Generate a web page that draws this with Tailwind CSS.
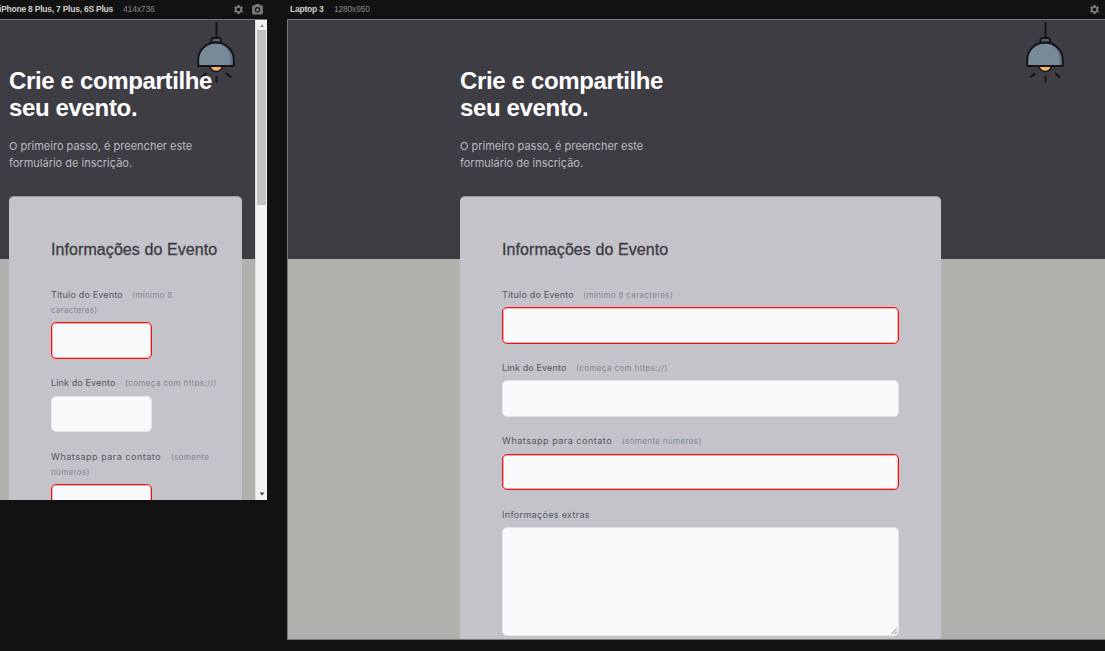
<!DOCTYPE html>
<html lang="pt-BR">
<head>
<meta charset="utf-8">
<title>Crie e compartilhe seu evento</title>
<script src="https://cdn.jsdelivr.net/npm/@tailwindcss/browser@4"></script>
</head>
<body class="h-[651px] w-[1105px] overflow-hidden bg-[#121212] font-['Inter',sans-serif]">
<svg class="hidden">
  <symbol id="gear" viewBox="0 0 24 24"><path fill="#77777a" d="M19.43 12.98c.04-.32.07-.64.07-.98s-.03-.66-.07-.98l2.11-1.65a.5.5 0 0 0 .12-.64l-2-3.46a.5.5 0 0 0-.61-.22l-2.49 1a7.3 7.3 0 0 0-1.69-.98l-.38-2.65A.49.49 0 0 0 14 2h-4a.49.49 0 0 0-.49.42l-.38 2.65c-.61.25-1.17.59-1.69.98l-2.49-1a.5.5 0 0 0-.61.22l-2 3.46a.49.49 0 0 0 .12.64l2.11 1.65a7.9 7.9 0 0 0 0 1.96l-2.11 1.65a.5.5 0 0 0-.12.64l2 3.46c.12.22.39.3.61.22l2.49-1c.52.4 1.08.73 1.69.98l.38 2.65c.03.24.24.42.49.42h4c.25 0 .46-.18.49-.42l.38-2.65a7.3 7.3 0 0 0 1.69-.98l2.49 1c.23.09.49 0 .61-.22l2-3.46a.5.5 0 0 0-.12-.64zM12 16a4 4 0 1 1 0-8 4 4 0 0 1 0 8z"/></symbol>
  <symbol id="camera" viewBox="0 0 24 24"><path fill="#77777a" fill-rule="evenodd" d="M9 2 7.200 4H4a2 2 0 0 0-2 2v13a2 2 0 0 0 2 2h16a2 2 0 0 0 2-2V6a2 2 0 0 0-2-2h-3.200L15 2zm3 5.500a5 5 0 1 1 0 10 5 5 0 0 1 0-10z"/><circle cx="12" cy="12.500" r="3" fill="#77777a"/></symbol>
  <symbol id="lamp" viewBox="0 0 40 64">
    <path d="M20.500 2v16" stroke="#141416" stroke-width="2"/>
    <path d="M14 45.500h12.500a6.200 6 0 0 1-12.500 0z" fill="#f5b277" stroke="#141416" stroke-width="1.600"/>
    <path d="M2.200 46v-6a17.800 17.500 0 0 1 35.600 0v6z" fill="#778a97"/>
    <path d="M28 25.500q7 5 7 14V46h-2 4v-7q0-8-9-13.500z" fill="#66718d" stroke="#66718d" stroke-width="1.500"/>
    <path d="M2.200 46v-6a17.800 17.500 0 0 1 35.600 0v6z" fill="none" stroke="#141416" stroke-width="2" stroke-linejoin="round"/>
    <path d="M15.500 22.500v-2.500a2 2 0 0 1 2-2h5.500a2 2 0 0 1 2 2v2.500z" fill="#5c5d66" stroke="#141416" stroke-width="1.800"/>
    <path d="M20.500 56v6.500M10.500 53l-5 4.500M30 53l5 4.500" stroke="#141416" stroke-width="2"/>
  </symbol>
</svg>

<template id="intro">
  <h1 class="text-[24px] leading-[27px] font-bold tracking-[-0.35px] whitespace-nowrap text-white font-['Liberation_Sans',sans-serif]">Crie e compartilhe<br>seu evento.</h1>
  <p class="mt-[17px] text-[11px] leading-[17px] whitespace-nowrap text-[#bab9bf]">O primeiro passo, é preencher este<br>formulário de inscrição.</p>
</template>

<div class="flex">
  <section class="w-[267px] shrink-0">
    <header class="flex h-[19px] items-center font-['Liberation_Sans',sans-serif] text-[8.500px]">
      <b class="w-[123px] whitespace-nowrap tracking-[-0.23px] text-[#cfcfcf] -indent-[1px]">iPhone 8 Plus, 7 Plus, 6S Plus</b>
      <span class="tracking-[-0.15px] text-[#858588]">414x736</span>
      <svg class="ml-auto size-[11px]"><use href="#gear"/></svg>
      <svg class="mr-[3px] ml-[7px] size-[13px]"><use href="#camera"/></svg>
    </header>
    <div class="flex h-[481px] overflow-hidden border-t border-[#77777a]">
      <main class="relative h-full w-[255px] bg-[linear-gradient(#3f3d44_239px,#b1b0ad_239px)] pt-[47px] pl-[9px]">
        <svg class="absolute top-0 left-[196px] h-[64px] w-[40px]"><use href="#lamp"/></svg>
        <div class="relative" data-intro></div>
        <div class="mt-[24px] h-[400px] w-[233px] rounded-t-[5px] border-t border-[#98979d] bg-[#c4c3c9] pt-[43px] pl-[42px]">
          <h2 class="h-[47px] whitespace-nowrap font-['Liberation_Sans',sans-serif] text-[16px] leading-[20px] tracking-[0.080px] text-[#3d3b43] [-webkit-text-stroke:0.300px_#3d3b43]">Informações do Evento</h2>
          <div class="mb-[16.500px] w-[175px]">
            <p class="mb-[5px] whitespace-nowrap text-[9px] leading-[15.200px] tracking-[0.190px] text-[#52585f]">Título do Evento <small class="ml-[6.500px] text-[8px] leading-[0] tracking-[0.300px] text-[#7d8990]">(mínimo 8<br>caracteres)</small></p>
            <div class="h-[36.500px] w-[101px] rounded-[5px] border border-[#f01010] bg-[#f9fafc] shadow-[inset_0_0_0_1px_#f9b4b4]"></div>
          </div>
          <div class="mb-[16.500px] w-[175px]">
            <p class="mb-[5px] whitespace-nowrap text-[9px] leading-[15.200px] tracking-[0.130px] text-[#52585f]">Link do Evento <small class="ml-[7px] text-[8px] leading-[0] tracking-[0.380px] text-[#7d8990]">(começa com https://)</small></p>
            <div class="h-[36.500px] w-[101px] rounded-[5px] border border-[#e3e3ea] bg-[#f9fafc]"></div>
          </div>
          <div class="w-[175px]">
            <p class="mb-[5px] whitespace-nowrap text-[9px] leading-[15.200px] tracking-[0.520px] text-[#52585f]">Whatsapp para contato <small class="ml-[6.500px] text-[8px] leading-[0] tracking-[0.370px] text-[#7d8990]">(somente<br>números)</small></p>
            <div class="h-[36.500px] w-[101px] rounded-[5px] border border-[#f01010] bg-[#f9fafc] shadow-[inset_0_0_0_1px_#f9b4b4]"></div>
          </div>
        </div>
      </main>
      <div class="flex w-[12px] flex-col items-center border-l border-[#dcdcdc] bg-[#f1f1f1]">
        <svg class="h-[10px] w-[6px] shrink-0" viewBox="0 0 6 10"><path d="M1 7h4L3 4z" fill="#909090"/></svg>
        <div class="h-[175px] w-[9px] shrink-0 bg-[#c1c1c1]"></div>
        <svg class="mt-auto h-[11px] w-[6px]" viewBox="0 0 6 11"><path d="M.5 3.500h5L3 6.500z" fill="#404040"/></svg>
      </div>
    </div>
  </section>

  <section class="ml-[20px] w-[818px]">
    <header class="flex h-[19px] items-center pl-[3px] font-['Liberation_Sans',sans-serif] text-[8.500px]">
      <b class="w-[44px] whitespace-nowrap tracking-[-0.230px] text-[#cfcfcf]">Laptop 3</b>
      <span class="tracking-[-0.200px] text-[#858588]">1280x950</span>
      <svg class="mr-[5px] ml-auto size-[11px]"><use href="#gear"/></svg>
    </header>
    <div class="h-[621px] overflow-hidden rounded-l-[1px] border-t border-b border-l border-[#77777a]">
      <main class="relative h-full bg-[linear-gradient(#3f3d44_239px,#b1b0ad_239px)] pt-[47px] pl-[172px]">
        <svg class="absolute top-0 left-[737px] h-[64px] w-[40px]"><use href="#lamp"/></svg>
        <div data-intro></div>
        <div class="mt-[24px] h-[500px] w-[481px] rounded-t-[5px] border-t border-[#98979d] bg-[#c4c3c9] px-[42px] pt-[43px]">
          <h2 class="h-[47px] whitespace-nowrap font-['Liberation_Sans',sans-serif] text-[16px] leading-[20px] tracking-[0.080px] text-[#3d3b43] [-webkit-text-stroke:0.300px_#3d3b43]">Informações do Evento</h2>
          <div class="mb-[16.500px]">
            <p class="mb-[5px] text-[9px] leading-[15.200px] tracking-[0.190px] text-[#52585f]">Título do Evento <small class="ml-[6.500px] text-[8px] leading-[0] tracking-[0.340px] text-[#7d8990]">(mínimo 8 caracteres)</small></p>
            <div class="h-[36.500px] rounded-[5px] border border-[#f01010] bg-[#f9fafc] shadow-[inset_0_0_0_1px_#f9b4b4]"></div>
          </div>
          <div class="mb-[16.500px]">
            <p class="mb-[5px] text-[9px] leading-[15.200px] tracking-[0.130px] text-[#52585f]">Link do Evento <small class="ml-[7px] text-[8px] leading-[0] tracking-[0.380px] text-[#7d8990]">(começa com https://)</small></p>
            <div class="h-[36.500px] rounded-[5px] border border-[#e3e3ea] bg-[#f9fafc]"></div>
          </div>
          <div class="mb-[16.500px]">
            <p class="mb-[5px] text-[9px] leading-[15.200px] tracking-[0.520px] text-[#52585f]">Whatsapp para contato <small class="ml-[6.500px] text-[8px] leading-[0] tracking-[0.370px] text-[#7d8990]">(somente números)</small></p>
            <div class="h-[36.500px] rounded-[5px] border border-[#f01010] bg-[#f9fafc] shadow-[inset_0_0_0_1px_#f9b4b4]"></div>
          </div>
          <div>
            <p class="mb-[5px] text-[9px] leading-[15.200px] tracking-[0.330px] text-[#52585f]">Informações extras</p>
            <div class="flex h-[109.500px] items-end justify-end rounded-[5px] border border-[#e3e3ea] bg-[#f9fafc]">
              <svg class="size-[7px]" viewBox="0 0 7 7"><path d="M.5 6 6 .5M3.500 6 6 3.500" stroke="#6b6b6b" stroke-width=".9"/></svg>
            </div>
          </div>
        </div>
      </main>
    </div>
  </section>
</div>
<script>
  const intro = document.getElementById('intro');
  document.querySelectorAll('[data-intro]').forEach(el => el.append(intro.content.cloneNode(true)));
</script>
</body>
</html>
